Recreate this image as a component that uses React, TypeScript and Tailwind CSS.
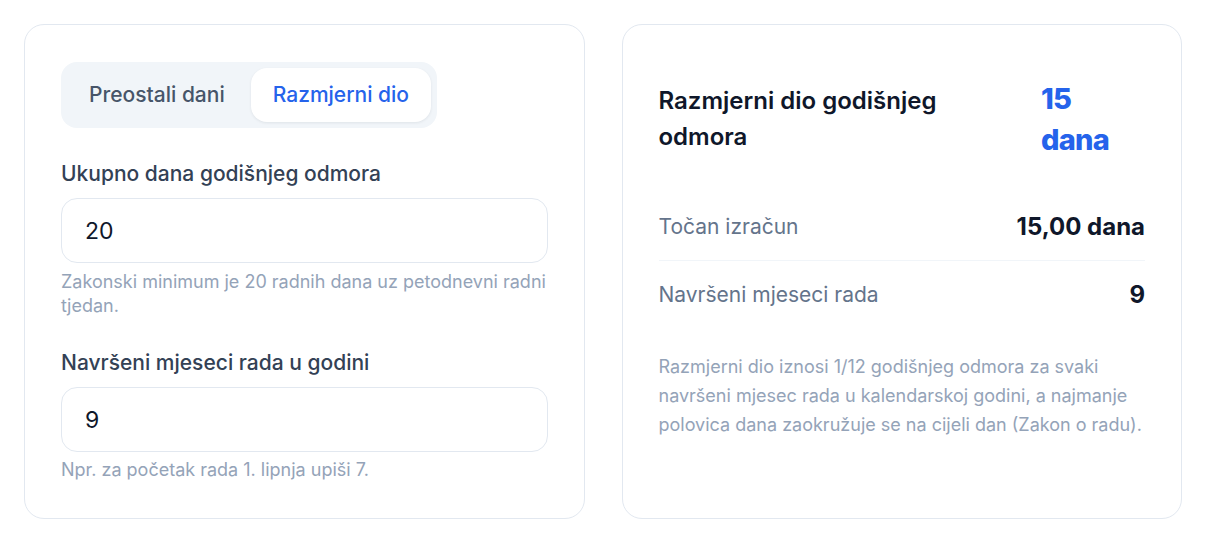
import React, { useState } from "react";

const Field: React.FC<{ label: string; value: string; hint: string; gap: string }> = ({ label, value, hint, gap }) => (
    <div className="flex flex-col">
        <label className="text-[21px] leading-7 font-medium text-[#334155]">{label}</label>
        <input
            defaultValue={value}
            className="mt-[10px] h-[65px] w-full rounded-2xl border border-[#e2e8f0] bg-white px-[23px] text-[23px] text-[#0f172a] outline-none"
        />
        <p className={gap + " text-[18px] leading-6 text-[#94a3b8]"}>{hint}</p>
    </div>
)

const App: React.FC = () => {
    const [tab, setTab] = useState<"preostali" | "razmjerni">("razmjerni")

    const tabCls = (active: boolean) =>
        "h-[54px] rounded-2xl px-[22px] text-[21px] font-medium " +
        (active ? "bg-white text-[#2563eb] shadow-[0_1px_3px_rgba(15,23,42,0.08)]" : "text-[#475569]")

    return <div className="min-h-screen w-full bg-white font-['Inter',sans-serif]">
        <div className="grid grid-cols-2 gap-[37px] px-6 pt-6">
            <div className="h-[495px] rounded-[20px] border border-[#e2e8f0] px-9 pt-[37px]">
                <div className="inline-flex gap-[4px] rounded-2xl bg-[#f1f5f9] p-[6px]">
                    <button onClick={() => setTab("preostali")} className={tabCls(tab === "preostali")}>
                        Preostali dani
                    </button>
                    <button onClick={() => setTab("razmjerni")} className={tabCls(tab === "razmjerni")}>
                        Razmjerni dio
                    </button>
                </div>
                <div className="mt-[32px] flex flex-col gap-[31px]">
                    <Field
                        label="Ukupno dana godišnjeg odmora"
                        value="20"
                        gap="mt-[7px]"
                        hint="Zakonski minimum je 20 radnih dana uz petodnevni radni tjedan."
                    />
                    <Field
                        label="Navršeni mjeseci rada u godini"
                        value="9"
                        gap="mt-[6px]"
                        hint="Npr. za početak rada 1. lipnja upiši 7."
                    />
                </div>
            </div>

            <div className="h-[495px] rounded-[20px] border border-[#e2e8f0] px-9 pt-[53px]">
                <div className="flex items-start justify-between gap-5">
                    <h2 className="mt-[5px] max-w-[320px] text-[24px] leading-9 font-semibold text-[#0f172a]">Razmjerni dio godišnjeg odmora</h2>
                    <div className="w-[104px] shrink-0 text-[29px] leading-[41px] font-extrabold tracking-tight text-[#2563eb]">
                        15<br />dana
                    </div>
                </div>
                <div className="mt-[51px]">
                    <div className="flex items-center justify-between border-b border-[#f1f5f9] pb-[17px]">
                        <span className="text-[21px] leading-8 text-[#64748b]">Točan izračun</span>
                        <span className="text-[24px] leading-8 font-bold text-[#0f172a]">15,00 dana</span>
                    </div>
                    <div className="flex items-center justify-between pt-[18px]">
                        <span className="text-[21px] leading-8 text-[#64748b]">Navršeni mjeseci rada</span>
                        <span className="text-[24px] leading-8 font-bold text-[#0f172a]">9</span>
                    </div>
                </div>
                <p className="mt-[41px] text-[18px] leading-[29px] text-[#94a3b8]">
                    Razmjerni dio iznosi 1/12 godišnjeg odmora za svaki navršeni mjesec rada u kalendarskoj godini, a najmanje polovica dana zaokružuje se na cijeli dan (Zakon o radu).
                </p>
            </div>
        </div>
    </div>
}

export default App;
